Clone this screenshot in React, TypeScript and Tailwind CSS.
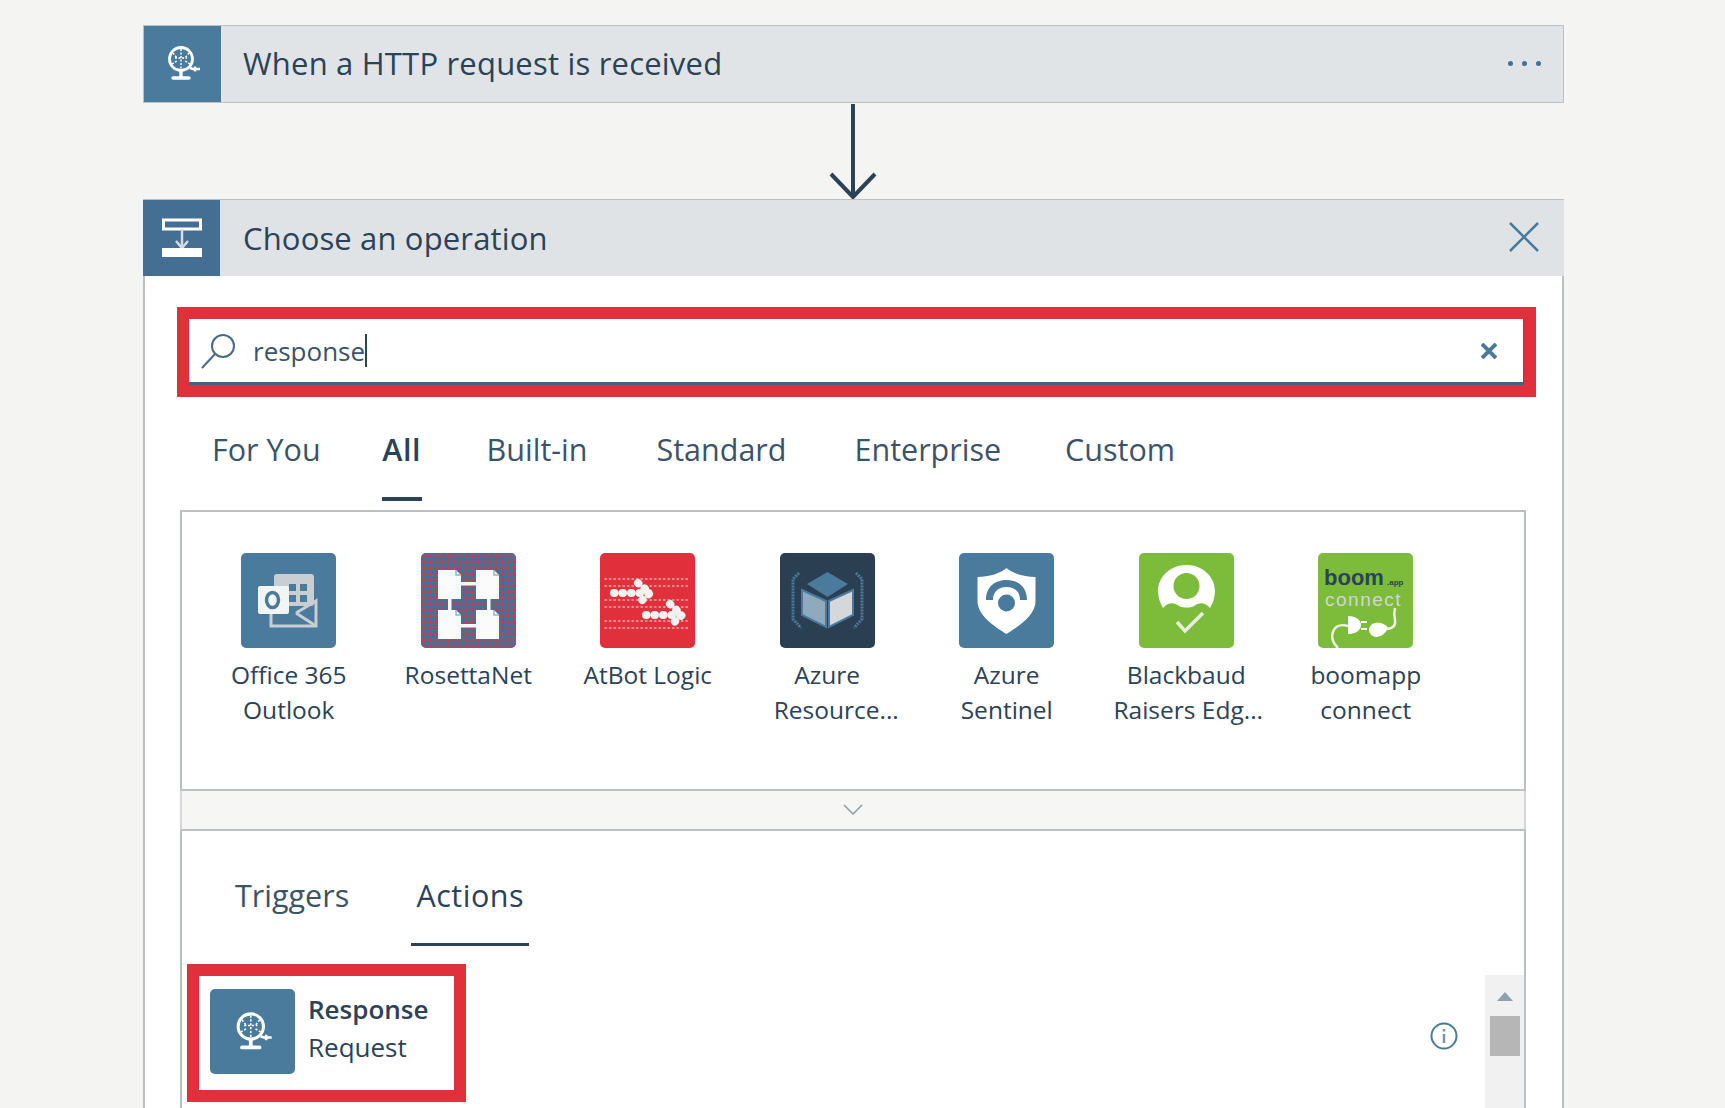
import React from 'react';

const font = { fontFamily: '"Open Sans", "Noto Sans", sans-serif' };
const logoFont = { fontFamily: '"Liberation Sans", Arial, sans-serif' };

// globe on a stand, used by the HTTP trigger and the Response action
const RequestIcon = ({ className }: { className: string }) => (
  <svg viewBox="0 0 40 40" className={className} fill="none" stroke="#fff">
    <circle cx="18" cy="15" r="11.5" strokeWidth="2.8" />
    <path d="M18 5v20M10 9l4 5M26 9l-4 5M9 20l5-3M27 20l-5-3M12 14h12" strokeWidth="1.4" strokeDasharray="2 1.5" />
    <path d="M18 27v5M10 34h16" strokeWidth="3.4" strokeLinecap="round" />
    <path d="M27 24l3 1h7" strokeWidth="2.4" />
    <path d="M32 22.5v5" strokeWidth="2.4" />
  </svg>
);

const OperationIcon = () => (
  <svg viewBox="0 0 40 40" className="w-[40px] h-[40px]" fill="none">
    <rect x="1.5" y="2" width="37" height="9" stroke="#fff" strokeWidth="3" />
    <path d="M20 11v17" stroke="#d5dbe0" strokeWidth="2.5" />
    <path d="M14 23l6 7 6-7" stroke="#d5dbe0" strokeWidth="2.5" />
    <rect x="0" y="30" width="40" height="9" fill="#fff" />
  </svg>
);

const OutlookIcon = () => (
  <svg viewBox="0 0 95 95" className="w-full h-full" fill="none">
    <rect x="33" y="21" width="40" height="32" rx="3" fill="#c9ced2" />
    <path d="M48 31h7v7h-7zM59 31h7v7h-7zM48 42h7v7h-7zM59 42h7v7h-7z" fill="#4a7a9c" />
    <path d="M30 60v13h45V48L55 60" stroke="#c9ced2" strokeWidth="3" />
    <path d="M55 60l20 13" stroke="#c9ced2" strokeWidth="3" />
    <rect x="17" y="33" width="31" height="28" rx="2" fill="#f3f4f4" />
    <ellipse cx="31.500" cy="47" rx="6" ry="7.500" stroke="#4a7a9c" strokeWidth="3.500" />
  </svg>
);

const RosettaIcon = () => (
  <svg viewBox="0 0 95 95" className="w-full h-full">
    <defs>
      <pattern id="rosetta-dots" width="3" height="3" patternUnits="userSpaceOnUse">
        <rect width="3" height="3" fill="#4a6f92" />
        <rect width="1.5" height="1.5" fill="#cf3848" />
      </pattern>
    </defs>
    <rect width="95" height="95" rx="5" fill="url(#rosetta-dots)" />
    <path d="M17 17h18l5 5v24H17zM55 17h18l5 5v24H55zM17 57h18l5 5v24H17zM55 57h18l5 5v24H55z" fill="#fbfbfb" />
    <path d="M40 29h15v3.500H40zM40 71h15v3.500H40zM27 46h3.500v11H27zM66 46h3.500v11H66z" fill="#fbfbfb" />
    <path d="M35 17v5h5M73 17v5h5M35 57v5h5M73 57v5h5" fill="none" stroke="#9fb1c2" strokeWidth="1.500" />
  </svg>
);

const AtBotIcon = () => (
  <svg viewBox="0 0 95 95" className="w-full h-full" fill="none" stroke="#f2f2f2" strokeLinecap="round" strokeLinejoin="round">
    <path d="M5 26h85M5 33h85M5 47h85M5 54h85M5 68h85M5 75h85" stroke="#f2a9ae" strokeWidth="1.400" strokeDasharray="1.500 3" />
    <path d="M14 40h36M38 30l12 10-12 11" strokeWidth="8" strokeDasharray="0.500 8" />
    <path d="M46 62h36M70 51l12 11-12 11" strokeWidth="8" strokeDasharray="0.500 8" />
  </svg>
);

const CubeIcon = () => (
  <svg viewBox="0 0 95 95" className="w-full h-full" fill="none">
    <path d="M47.500 19L68 31 47.500 44 27 31z" fill="#4a7a9c" />
    <path d="M22 37l24 11v26L22 62z" fill="#8fa9bd" stroke="#4a7a9c" strokeWidth="2" />
    <path d="M73 37L49 48v26l24-12z" fill="#d4d8da" stroke="#4a7a9c" strokeWidth="2" />
    <path d="M19 20l-6 6v40l8 9M76 20l6 6v40l-8 9" stroke="#4a7a9c" strokeWidth="3" strokeDasharray="2 1" />
  </svg>
);

const SentinelIcon = () => (
  <svg viewBox="0 0 95 95" className="w-full h-full">
    <path d="M47.500 15c5 5 18 9 29 9v24c0 14-16 25-29 33-13-8-29-19-29-33V24c11 0 24-4 29-9z" fill="#fff" />
    <path d="M27 47c0-14 10-20 20.500-20S68 33 68 47h-7c0-9-6-13-13.500-13S34 38 34 47z" fill="#4a7a9c" />
    <circle cx="47.500" cy="50" r="8.500" fill="#4a7a9c" />
  </svg>
);

const BlackbaudIcon = () => (
  <svg viewBox="0 0 95 95" className="w-full h-full" fill="none">
    <path d="M47.500 12C30 12 19 25 19 38c0 6 2 12 5 17 6-7 12-5 16-2 4 2 11 2 15 0 4-3 10-5 16 2 3-5 5-11 5-17 0-13-11-26-28.500-26z" fill="#fff" />
    <ellipse cx="47.500" cy="33" rx="13" ry="13" fill="#7cbc3a" />
    <path d="M38 69l8 9 18-18" stroke="#e7eedc" strokeWidth="3.500" />
  </svg>
);

const BoomIcon = () => (
  <svg viewBox="0 0 95 95" className="w-full h-full" fill="none">
    <text x="6" y="32" fontSize="22" fontWeight="700" fill="#2b4257" style={logoFont}>boom</text>
    <text x="69" y="32" fontSize="8" fontWeight="700" fill="#2b4257" style={logoFont}>.app</text>
    <text x="7" y="53" fontSize="19" letterSpacing="1.500" fill="#d3d6d0" style={logoFont}>connect</text>
    <path d="M20 95c-5-5-7-11-5-16 2-6 8-8 15-6" stroke="#eef2e8" strokeWidth="2.500" />
    <path d="M27 64c8 0 13 4 13 9s-5 9-13 9z" fill="#fff" transform="translate(3 -1)" />
    <path d="M43 69h6M43 76h6" stroke="#fff" strokeWidth="2" />
    <path d="M70 75c-2-4-8-6-13-5-4 1-6 4-6 7s3 7 7 7c5 0 10-4 12-9z" fill="#fff" />
    <path d="M68 76c7 0 10-4 9-9-1-4-1-8 0-12" stroke="#eef2e8" strokeWidth="2.500" />
  </svg>
);

const connectors = [
  { lines: ['Office 365', 'Outlook'], bg: 'bg-[#4a7a9c]', Icon: OutlookIcon, second: '' },
  { lines: ['RosettaNet'], bg: 'bg-[#4a6f92]', Icon: RosettaIcon, second: '' },
  { lines: ['AtBot Logic'], bg: 'bg-[#e0303c]', Icon: AtBotIcon, second: '' },
  { lines: ['Azure', 'Resource...'], bg: 'bg-[#2b3f52]', Icon: CubeIcon, second: 'ml-[18px]' },
  { lines: ['Azure', 'Sentinel'], bg: 'bg-[#4a7a9c]', Icon: SentinelIcon, second: '' },
  { lines: ['Blackbaud', 'Raisers Edg...'], bg: 'bg-[#7cbc3a]', Icon: BlackbaudIcon, second: 'ml-[4px]' },
  { lines: ['boomapp', 'connect'], bg: 'bg-[#7cbc3a]', Icon: BoomIcon, second: '' },
];

const categories = [
  { label: 'For You', gap: '' },
  { label: 'All', gap: 'ml-[61px]' },
  { label: 'Built-in', gap: 'ml-[65px]' },
  { label: 'Standard', gap: 'ml-[69px]' },
  { label: 'Enterprise', gap: 'ml-[68px]' },
  { label: 'Custom', gap: 'ml-[64px]' },
];

export default function App() {
  return (
    <div style={font} className="h-[1108px] overflow-hidden bg-[#f4f4f2] pt-[25px] pl-[143px] text-[#2b4257]">
      <div className="w-[1421px]">
        {/* Trigger card */}
        <div className="h-[78px] flex items-stretch bg-[#e0e4e6] border border-[#bcc0c2]">
          <div className="w-[77px] bg-[#4a7a9c] flex items-center justify-center">
            <RequestIcon className="w-[40px] h-[40px]" />
          </div>
          <div className="flex-1 flex items-center pl-[22px] pb-[2px] text-[31px] tracking-[0.2px]">When a HTTP request is received</div>
          <div className="flex items-center gap-[9px] pr-[22px] pb-[2px]">
            <span className="w-[5px] h-[5px] rounded-full bg-[#3f7196]"></span>
            <span className="w-[5px] h-[5px] rounded-full bg-[#3f7196]"></span>
            <span className="w-[5px] h-[5px] rounded-full bg-[#3f7196]"></span>
          </div>
        </div>

        {/* Connector arrow */}
        <div className="h-[96px] flex justify-center pr-[2px]">
          <svg viewBox="0 0 50 96" className="w-[50px] h-[96px]" fill="none" stroke="#2b4257" strokeWidth="4">
            <path d="M25 1v92M3 71l22 23 22-23" />
          </svg>
        </div>

        {/* Choose an operation card */}
        <div className="border-x-2 border-[#bcc0c2] bg-white h-[1000px]">
          <div className="-mx-[2px] h-[77px] flex items-stretch bg-[#dfe3e6] border-t border-[#bcc0c2]">
            <div className="w-[77px] bg-[#456f92] flex items-center justify-center">
              <OperationIcon />
            </div>
            <div className="flex-1 flex items-center pl-[23px] text-[31px] tracking-[0.15px]">Choose an operation</div>
            <div className="flex items-center pr-[25px] pb-[2px]">
              <svg viewBox="0 0 30 30" className="w-[30px] h-[30px]" fill="none" stroke="#4a7a9c" strokeWidth="2.500">
                <path d="M1 1l28 28M29 1L1 29" />
              </svg>
            </div>
          </div>

          <div className="pt-[31px] pl-[32px] pr-[26px]">
            <div className="h-[90px] border-[12px] border-[#e0303c] bg-white flex items-center">
              <div className="flex-1 h-full flex items-center pl-[11px] border-b-[3px] border-r border-[#3c6484]">
                <svg viewBox="0 0 38 38" className="w-[38px] h-[38px]" fill="none" stroke="#4a6a84">
                  <circle cx="23" cy="14" r="11" strokeWidth="2" />
                  <path d="M15 22L2 36" strokeWidth="2" />
                </svg>
                <span className="ml-[15px] text-[26px] leading-none text-[#3b5367]">response</span>
                <span className="w-[2px] h-[33px] bg-[#2b4257]"></span>
                <span className="flex-1"></span>
                <svg viewBox="0 0 16 16" className="w-[16px] h-[16px] mr-[26px]" fill="none" stroke="#4a7a9c" strokeWidth="4">
                  <path d="M1 1l14 14M15 1L1 15" />
                </svg>
              </div>
            </div>
          </div>

          {/* Category tabs */}
          <div className="h-[113px] pl-[67px] flex pt-[32px]">
            {categories.map(({ label, gap }) => (
              <div key={label} className={`flex flex-col items-center ${gap}`}>
                <span className={`text-[30.500px] leading-[40px] whitespace-nowrap ${label === 'All' ? 'font-semibold tracking-[0.5px]' : 'text-[#3b5367]'}`}>{label}</span>
                {label === 'All' && <span className="w-[40px] h-[4px] mt-[28px] bg-[#2b4257]"></span>}
              </div>
            ))}
          </div>

          <div className="ml-[35px] mr-[36px]">
            {/* Connector picker */}
            <div className="h-[281px] border-2 border-[#bcc0c2] flex pl-[17px] pt-[41px]">
              {connectors.map(({ lines, bg, Icon, second }) => (
                <div key={lines.join(' ')} className="w-[179.500px] flex flex-col items-center">
                  <div className={`w-[95px] h-[95px] rounded-[5px] overflow-hidden ${bg}`}>
                    <Icon />
                  </div>
                  <div className="mt-[9px] text-[24.500px] leading-[35px] text-center whitespace-nowrap">
                    {lines.map((l, i) => (
                      <div key={l} className={i === 1 ? second : ''}>{l}</div>
                    ))}
                  </div>
                </div>
              ))}
            </div>

            {/* Collapse strip */}
            <div className="h-[38px] bg-[#f6f6f5] border-x-2 border-[#d4d6d7] flex items-center justify-center">
              <svg viewBox="0 0 20 12" className="w-[20px] h-[12px]" fill="none" stroke="#8e9aa4" strokeWidth="1.500">
                <path d="M1 1l9 9 9-9" />
              </svg>
            </div>

            {/* Results */}
            <div className="border-x-2 border-t-2 border-[#bcc0c2]">
              <div className="h-[133px] pl-[53px] flex gap-[62px] pt-[44px]">
                <span className="text-[30.500px] leading-[40px] text-[#3b5367]">Triggers</span>
                <div className="flex flex-col items-center">
                  <span className="text-[30.500px] leading-[40px] font-medium tracking-[0.5px] whitespace-nowrap">Actions</span>
                  <span className="w-[118px] h-[3px] mt-[28px] bg-[#2b4257]"></span>
                </div>
              </div>
              <div className="flex items-start pl-[5px]">
                <div className="w-[279px] h-[138px] border-[12px] border-[#e0303c] bg-white flex pl-[11px] pt-[13px]">
                  <div className="w-[85px] h-[85px] rounded-[5px] bg-[#4a7a9c] flex items-center justify-center">
                    <RequestIcon className="w-[44px] h-[44px]" />
                  </div>
                  <div className="ml-[13px] mt-[1px]">
                    <div className="text-[26px] leading-[38px] font-semibold">Response</div>
                    <div className="text-[26px] leading-[38px]">Request</div>
                  </div>
                </div>
                <div className="flex-1 flex justify-end pt-[58px] pr-[27px]">
                  <svg viewBox="0 0 28 28" className="w-[28px] h-[28px]" fill="none" stroke="#4a7a9c" strokeWidth="2">
                    <circle cx="14" cy="14" r="12.500" />
                    <path d="M14 12v9M14 7v2.500" stroke="#7b93a6" strokeWidth="2.500" />
                  </svg>
                </div>
                <div className="w-[39px] h-[138px] mt-[11px] bg-[#f1f1f1] flex flex-col items-center pt-[17px]">
                  <svg viewBox="0 0 16 9" className="w-[16px] h-[9px]">
                    <path d="M8 0l8 9H0z" fill="#8fa0ae" />
                  </svg>
                  <div className="w-[30px] h-[40px] mt-[15px] bg-[#b6b6b6]"></div>
                </div>
              </div>
            </div>
          </div>
        </div>
      </div>
    </div>
  );
}
